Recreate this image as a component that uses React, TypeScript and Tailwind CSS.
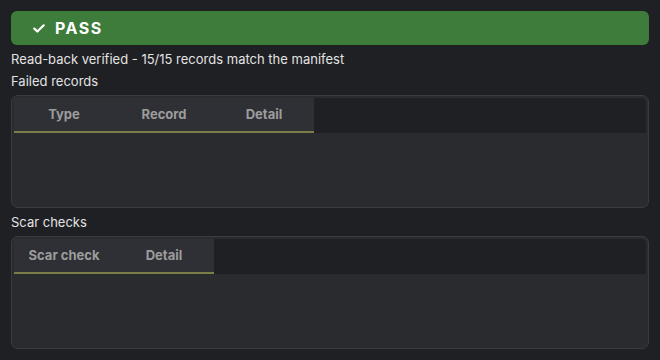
import React from "react";

function Table({ cols }: { cols: string[] }) {
  return (
    <div className="h-[113px] rounded-[7px] border border-[#3b3c41] bg-[#2a2b2f] p-[2px]">
      <div className="flex h-[35px] rounded-t-[5px] bg-[#1f2024]">
        {cols.map((c) => (
          <div
            key={c}
            className="flex w-[100px] items-center justify-center border-b-2 border-[#7c7e48] bg-[#2f3035] text-[13px] font-bold text-[#9c9c9c]"
          >
            {c}
          </div>
        ))}
      </div>
    </div>
  );
}

export default function App() {
  return (
    <div
      className="h-[360px] w-[660px] bg-[#1f2024] px-[11px] pt-[11px] text-[#e3e3e3]"
      style={{ fontFamily: "Inter, 'Noto Sans', sans-serif" }}
    >
      <div className="flex h-[34px] items-center rounded-[6px] bg-[#3e7c3b] pl-[22px]">
        <svg width="12" height="9" viewBox="0 0 12 9" className="mr-[10px]">
          <path d="M1.3 4.6 L4.4 7.5 L10.7 1.3" fill="none" stroke="white" strokeWidth="2.2" strokeLinecap="round" strokeLinejoin="round" />
        </svg>
        <span className="text-[16px] font-bold tracking-[1.5px] text-white">PASS</span>
      </div>
      <div className="mt-[5px] text-[13px] leading-[18px]">
        Read-back verified - 15/15 records match the manifest
      </div>
      <div className="mt-[4px] text-[13px] leading-[18px]">Failed records</div>
      <div className="mt-[5px]">
        <Table cols={["Type", "Record", "Detail"]} />
      </div>
      <div className="mt-[5px] text-[13px] leading-[18px]">Scar checks</div>
      <div className="mt-[5px]">
        <Table cols={["Scar check", "Detail"]} />
      </div>
    </div>
  );
}
